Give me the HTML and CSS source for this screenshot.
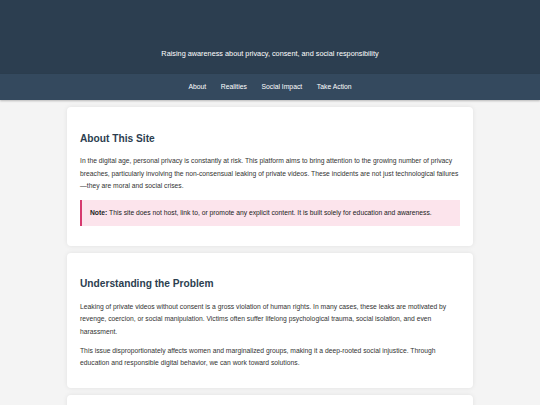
FILE: index.html
```html
<!DOCTYPE html>
<html lang="en">
<head>
<meta charset="utf-8">
<title>Privacy Awareness</title>
<link rel="stylesheet" href="styles.css">
</head>
<body>
<header class="site-header">
  <p class="tagline">Raising awareness about privacy, consent, and social responsibility</p>
</header>
<nav class="site-nav">
  <a href="#about">About</a>
  <a href="#realities">Realities</a>
  <a href="#impact">Social Impact</a>
  <a href="#action">Take Action</a>
</nav>
<main class="content">
  <section class="card" id="about">
    <h2>About This Site</h2>
    <p>In the digital age, personal privacy is constantly at risk. This platform aims to bring attention to the growing number of privacy breaches, particularly involving the non-consensual leaking of private videos. These incidents are not just technological failures—they are moral and social crises.</p>
    <div class="note"><strong>Note:</strong> This site does not host, link to, or promote any explicit content. It is built solely for education and awareness.</div>
  </section>
  <section class="card" id="realities">
    <h2>Understanding the Problem</h2>
    <p>Leaking of private videos without consent is a gross violation of human rights. In many cases, these leaks are motivated by revenge, coercion, or social manipulation. Victims often suffer lifelong psychological trauma, social isolation, and even harassment.</p>
    <p>This issue disproportionately affects women and marginalized groups, making it a deep-rooted social injustice. Through education and responsible digital behavior, we can work toward solutions.</p>
  </section>
  <section class="card" id="impact">
    <h2>Social Impact</h2>
    <p>Beyond individual harm, these violations erode trust in digital spaces.</p>
  </section>
</main>
</body>
</html>
```
FILE: styles.css
```css
* { box-sizing: border-box; }
body {
  margin: 0;
  background: #f4f4f4;
  font-family: "Liberation Sans", Arial, sans-serif;
  font-size: 6.75px;
  line-height: 12.5px;
  color: #333;
}
.site-header {
  background: #2c3e50;
  color: #fff;
  height: 74px;
  display: flex;
  flex-direction: column;
  justify-content: flex-end;
  align-items: center;
  padding-bottom: 14px;
}
.tagline {
  margin: 0;
  font-size: 7.3px;
  line-height: 12px;
}
.site-nav {
  background: #34495e;
  height: 26px;
  display: flex;
  justify-content: center;
  align-items: center;
  box-shadow: 0 1px 2px rgba(0,0,0,0.25);
}
.site-nav a {
  color: #fff;
  text-decoration: none;
  font-size: 6.8px;
  margin: 0 7.3px;
}
.content {
  width: 406px;
  margin: 0 auto;
  padding-top: 7px;
}
.card {
  background: #fff;
  border-radius: 4px;
  box-shadow: 0 0 5px rgba(0,0,0,0.08);
  padding: 13px 13px 12px;
  margin-bottom: 7px;
}
.card h2 {
  color: #2c3e50;
  font-size: 10.2px;
  line-height: 12.6px;
  margin: 12.5px 0 10px;
}
.card p {
  margin: 6.5px 0;
}
.card h2 + p { margin-top: 0; }
.note {
  background: #fce4ec;
  border-left: 2px solid #d63a6f;
  padding: 7px 8px;
  margin: 7px 0 8px;
  line-height: 12px;
  color: #222;
}
```
